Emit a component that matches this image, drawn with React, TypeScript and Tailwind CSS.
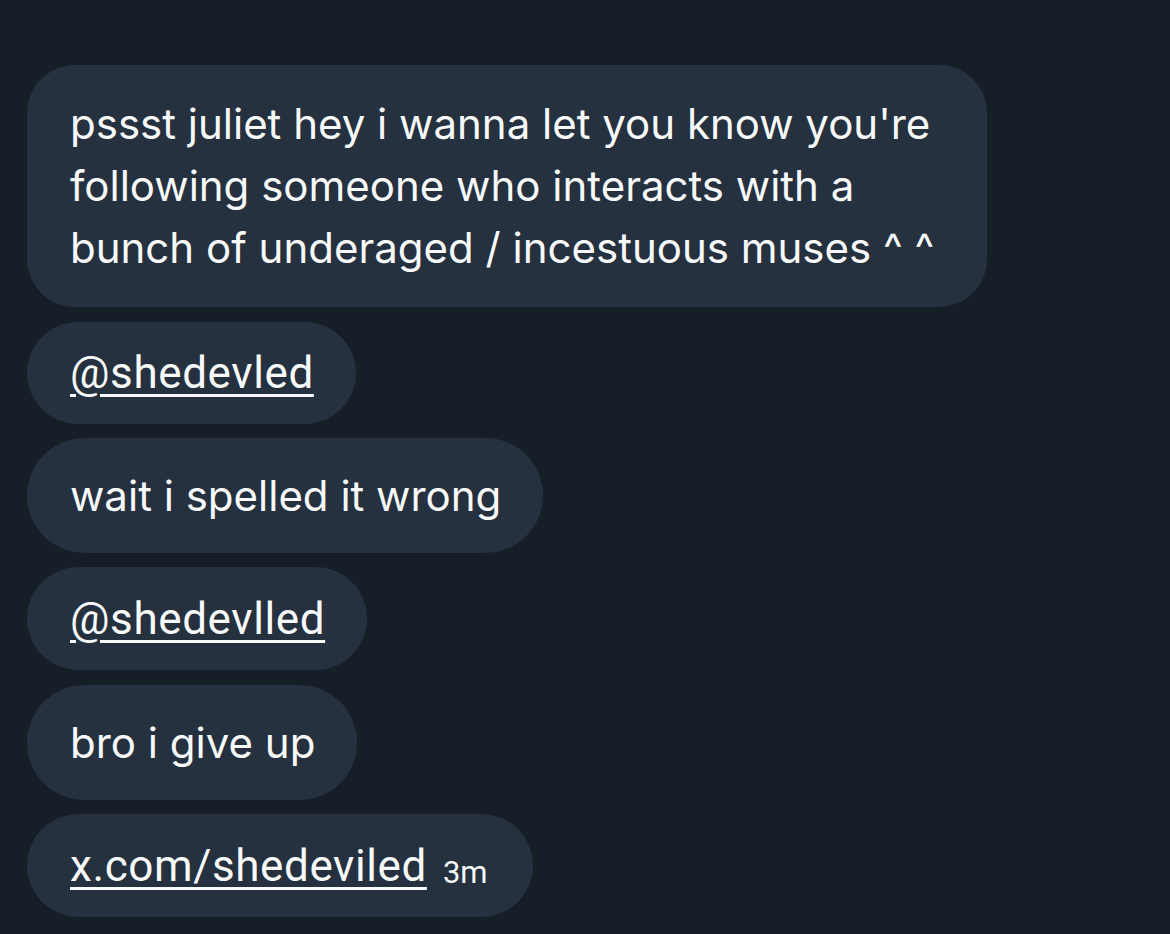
import React from "react";

const bubble = "self-start bg-[#263140] text-[#f7f9f9] pl-[43px] pr-[42px] text-[42px] leading-[62px]";
const link = "underline decoration-[3px] underline-offset-[6px] text-[44px] leading-none tracking-[0.6px] font-['Roboto',sans-serif]";

export default function App() {
  return (
    <div
      className="w-[1170px] h-[934px] bg-[#161e28] overflow-hidden flex flex-col gap-[14px] pl-[27px] pt-[65px]"
      style={{ fontFamily: "Inter, 'Open Sans', sans-serif" }}
    >
      <div className={`${bubble} w-[960px] rounded-[48px] pt-[28px] pb-[28px] mb-[1px]`}>
        pssst juliet hey i wanna let you know you're following someone who interacts with a bunch of underaged / incestuous muses ^ ^
      </div>
      <div className={`${bubble} rounded-full pt-[20px] pb-[20px]`}>
        <span className={link}>@shedevled</span>
      </div>
      <div className={`${bubble} rounded-full pt-[27px] pb-[26px]`}>wait i spelled it wrong</div>
      <div className={`${bubble} rounded-full pt-[21px] pb-[20px] mb-[1px]`}>
        <span className={link}>@shedevlled</span>
      </div>
      <div className={`${bubble} rounded-full pt-[27px] pb-[26px]`}>bro i give up</div>
      <div className={`${bubble} rounded-full pt-[21px] pb-[20px] pr-[45px]`}>
        <span className={link}>x.com/shedeviled</span>
        <span className="ml-[16px] text-[31px] leading-none relative top-[2px] font-['Roboto',sans-serif]">3m</span>
      </div>
    </div>
  );
}
